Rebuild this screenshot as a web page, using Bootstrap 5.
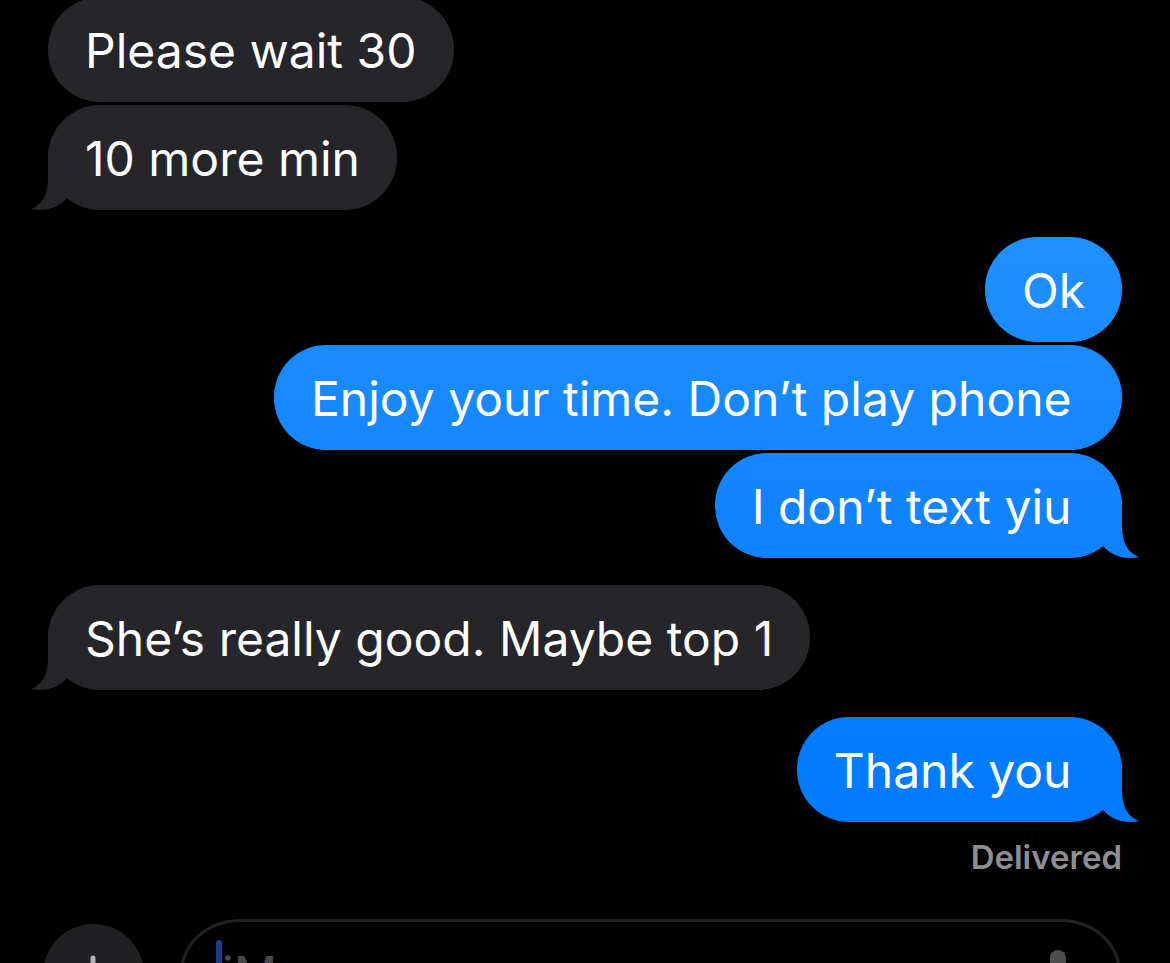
<!DOCTYPE html>
<html lang="en" data-bs-theme="dark">
<head>
<meta charset="utf-8">
<meta name="viewport" content="width=device-width, initial-scale=1">
<title>Messages</title>
<link href="https://cdn.jsdelivr.net/npm/bootstrap@5.3.0/dist/css/bootstrap.min.css" rel="stylesheet">
<style>
  body { background: #000; color: #fff; font-family: Inter, "Liberation Sans", sans-serif; }
  .chat-page { height: 100vh; }
  .thread { margin-top: -3px; padding: 0 48px; gap: 27px; }
  .run { gap: 3px; }
  .bubble { padding: 17px 37px 15px; font-size: 48px; line-height: 73px; border-radius: 52px; }
  .received { background: #26252a; }
  /* one gradient runs down the whole window behind every sent bubble */
  .sent { background: linear-gradient(#2896ff 0, #2090ff 25%, #1283ff 55%, #027dff 75%, #007aff 85%) fixed; }
  .tail::after {
    content: ""; position: absolute; right: -18px; bottom: 0; width: 40px; height: 58px;
    background: inherit;
    clip-path: path("M0 0 H22 V26 C22 43 28 53 39 57 C25 60 12 56 3 46 Z");
  }
  .received.tail::after { right: auto; left: -18px; transform: scaleX(-1); }
  .receipt { color: #8e8e93; font-size: 33px; font-weight: 600; line-height: 38px; margin-top: 16px; }
  .composer { margin-top: 43px; padding: 0 49px 0 43px; gap: 36px; }
  .add-btn { width: 101px; height: 101px; background: #202022; color: #b0b0b3; }
  .field { border: 3px solid #222224; border-radius: 60px / 54px; height: 110px; padding: 0 42px 0 33px; }
  .field-input, .field-input:focus { background: transparent; border: 0; outline: 0; color: #fff; font-size: 48px; line-height: 60px; min-width: 0; }
  .field-input::placeholder { color: #48484a; opacity: 1; }
  .caret { width: 6px; height: 68px; border-radius: 3px; background: #253a87; }
  .mic-btn { color: #4e4e50; }
</style>
</head>
<body>
<div class="chat-page d-flex flex-column overflow-hidden">
  <main class="thread d-flex flex-column flex-shrink-0">
    <div class="run d-flex flex-column align-items-start">
      <div class="bubble received">Please wait 30</div>
      <div class="bubble received tail position-relative">10 more min</div>
    </div>
    <div class="run d-flex flex-column align-items-end">
      <div class="bubble sent">Ok</div>
      <div class="bubble sent">Enjoy your time. Don’t play phone&nbsp;</div>
      <div class="bubble sent tail position-relative">I don’t text yiu&nbsp;</div>
    </div>
    <div class="run d-flex flex-column align-items-start">
      <div class="bubble received tail position-relative">She’s really good. Maybe top 1</div>
    </div>
    <div class="d-flex flex-column align-items-end">
      <div class="bubble sent tail position-relative">Thank you&nbsp;</div>
      <div class="receipt">Delivered</div>
    </div>
  </main>
  <form class="composer d-flex align-items-center flex-shrink-0">
    <button type="button" class="add-btn btn rounded-circle p-0 border-0 flex-shrink-0 d-flex align-items-center justify-content-center" aria-label="Add attachment">
      <svg width="40" height="40" viewBox="0 0 40 40" fill="none" stroke="currentColor" stroke-width="5" stroke-linecap="round"><path d="M19 4V36M3 20H35"/></svg>
    </button>
    <div class="field d-flex align-items-center flex-grow-1">
      <span class="caret flex-shrink-0"></span>
      <input class="field-input flex-grow-1 p-0" type="text" placeholder="iMessage" aria-label="iMessage">
      <button type="button" class="mic-btn btn border-0 p-0" aria-label="Dictate">
        <svg class="d-block" width="36" height="48" viewBox="0 0 36 48" fill="none"><rect x="10" width="16" height="30" rx="8" fill="currentColor"/><path d="M4 21V24a14 14 0 0 0 28 0V21M18 38V46M10 46H26" stroke="currentColor" stroke-width="3" stroke-linecap="round"/></svg>
      </button>
    </div>
  </form>
</div>
<script src="https://cdn.jsdelivr.net/npm/bootstrap@5.3.0/dist/js/bootstrap.bundle.min.js"></script>
</body>
</html>
